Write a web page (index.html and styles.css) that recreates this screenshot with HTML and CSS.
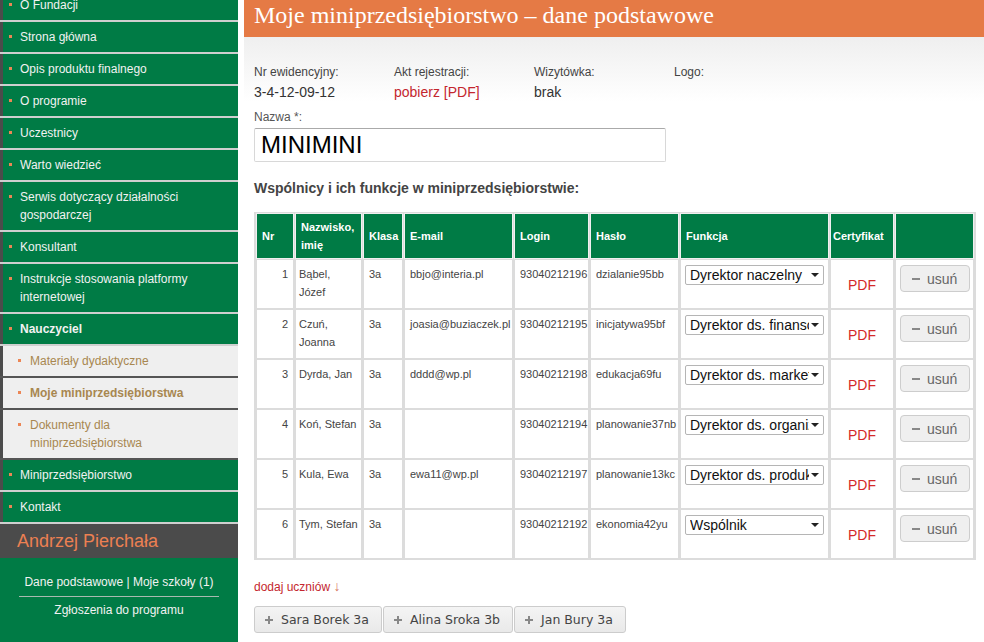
FILE: index.html
```html
<!DOCTYPE html>
<html lang="pl">
<head>
<meta charset="utf-8">
<title>Moje miniprzedsiębiorstwo – dane podstawowe</title>
<link rel="stylesheet" href="styles.css">
</head>
<body>
<div class="page">
  <aside class="sidebar">
    <ul class="menu">
      <li><a href="#">O Fundacji</a></li>
      <li><a href="#">Strona główna</a></li>
      <li><a href="#">Opis produktu finalnego</a></li>
      <li><a href="#">O programie</a></li>
      <li><a href="#">Uczestnicy</a></li>
      <li><a href="#">Warto wiedzieć</a></li>
      <li><a href="#">Serwis dotyczący działalności gospodarczej</a></li>
      <li><a href="#">Konsultant</a></li>
      <li><a href="#">Instrukcje stosowania platformy internetowej</a></li>
      <li class="strong"><a href="#">Nauczyciel</a></li>
      <li class="sub"><a href="#">Materiały dydaktyczne</a></li>
      <li class="sub strong"><a href="#">Moje miniprzedsiębiorstwa</a></li>
      <li class="sub"><a href="#">Dokumenty dla miniprzedsiębiorstwa</a></li>
      <li><a href="#">Miniprzedsiębiorstwo</a></li>
      <li><a href="#">Kontakt</a></li>
    </ul>
    <div class="user">Andrzej Pierchała</div>
    <div class="user-links">
      <div class="user-line">Dane podstawowe | Moje szkoły (1)</div>
      <div class="user-sep"></div>
      <div class="user-line">Zgłoszenia do programu</div>
    </div>
  </aside>

  <main class="main">
    <header class="title-bar">
      <h1>Moje miniprzedsiębiorstwo – dane podstawowe</h1>
    </header>
    <div class="content">
      <div class="info">
        <div class="info-item">
          <div class="label">Nr ewidencyjny:</div>
          <div class="value">3-4-12-09-12</div>
        </div>
        <div class="info-item">
          <div class="label">Akt rejestracji:</div>
          <div class="value link">pobierz [PDF]</div>
        </div>
        <div class="info-item">
          <div class="label">Wizytówka:</div>
          <div class="value">brak</div>
        </div>
        <div class="info-item">
          <div class="label">Logo:</div>
        </div>
      </div>

      <div class="field-label">Nazwa *:</div>
      <input class="name-input" type="text" value="MINIMINI">

      <h2 class="section-title">Wspólnicy i ich funkcje w miniprzedsiębiorstwie:</h2>

      <table class="members">
        <colgroup>
          <col class="c-nr"><col class="c-name"><col class="c-class"><col class="c-mail"><col class="c-login"><col class="c-pass"><col class="c-func"><col class="c-cert"><col class="c-act">
        </colgroup>
        <thead>
          <tr>
            <th>Nr</th><th>Nazwisko, imię</th><th>Klasa</th><th>E-mail</th><th>Login</th><th>Hasło</th><th>Funkcja</th><th class="th-cert">Certyfikat</th><th></th>
          </tr>
        </thead>
        <tbody>
          <tr>
            <td class="nr">1</td><td class="name">Bąbel, Józef</td><td>3a</td><td>bbjo@interia.pl</td><td>93040212196</td><td>dzialanie95bb</td>
            <td class="func"><span class="select-wrap"><select class="select"><option>Dyrektor naczelny</option></select><svg class="caret" width="8" height="4" viewBox="0 0 8 4"><path d="M0 0h8L4 4z"/></svg></span></td>
            <td class="cert"><span class="pdf">PDF</span></td>
            <td class="act"><button class="remove"><svg width="8" height="2" viewBox="0 0 8 2"><rect width="8" height="2"/></svg>usuń</button></td>
          </tr>
          <tr>
            <td class="nr">2</td><td class="name">Czuń, Joanna</td><td>3a</td><td>joasia@buziaczek.pl</td><td>93040212195</td><td>inicjatywa95bf</td>
            <td class="func"><span class="select-wrap"><select class="select"><option>Dyrektor ds. finansów</option></select><svg class="caret" width="8" height="4" viewBox="0 0 8 4"><path d="M0 0h8L4 4z"/></svg></span></td>
            <td class="cert"><span class="pdf">PDF</span></td>
            <td class="act"><button class="remove"><svg width="8" height="2" viewBox="0 0 8 2"><rect width="8" height="2"/></svg>usuń</button></td>
          </tr>
          <tr>
            <td class="nr">3</td><td class="name">Dyrda, Jan</td><td>3a</td><td>dddd@wp.pl</td><td>93040212198</td><td>edukacja69fu</td>
            <td class="func"><span class="select-wrap"><select class="select"><option>Dyrektor ds. marketingu</option></select><svg class="caret" width="8" height="4" viewBox="0 0 8 4"><path d="M0 0h8L4 4z"/></svg></span></td>
            <td class="cert"><span class="pdf">PDF</span></td>
            <td class="act"><button class="remove"><svg width="8" height="2" viewBox="0 0 8 2"><rect width="8" height="2"/></svg>usuń</button></td>
          </tr>
          <tr>
            <td class="nr">4</td><td class="name">Koń, Stefan</td><td>3a</td><td></td><td>93040212194</td><td>planowanie37nb</td>
            <td class="func"><span class="select-wrap"><select class="select"><option>Dyrektor ds. organizacji</option></select><svg class="caret" width="8" height="4" viewBox="0 0 8 4"><path d="M0 0h8L4 4z"/></svg></span></td>
            <td class="cert"><span class="pdf">PDF</span></td>
            <td class="act"><button class="remove"><svg width="8" height="2" viewBox="0 0 8 2"><rect width="8" height="2"/></svg>usuń</button></td>
          </tr>
          <tr>
            <td class="nr">5</td><td class="name">Kula, Ewa</td><td>3a</td><td>ewa11@wp.pl</td><td>93040212197</td><td>planowanie13kc</td>
            <td class="func"><span class="select-wrap"><select class="select"><option>Dyrektor ds. produkcji</option></select><svg class="caret" width="8" height="4" viewBox="0 0 8 4"><path d="M0 0h8L4 4z"/></svg></span></td>
            <td class="cert"><span class="pdf">PDF</span></td>
            <td class="act"><button class="remove"><svg width="8" height="2" viewBox="0 0 8 2"><rect width="8" height="2"/></svg>usuń</button></td>
          </tr>
          <tr>
            <td class="nr">6</td><td class="name">Tym, Stefan</td><td>3a</td><td></td><td>93040212192</td><td>ekonomia42yu</td>
            <td class="func"><span class="select-wrap"><select class="select"><option>Wspólnik</option></select><svg class="caret" width="8" height="4" viewBox="0 0 8 4"><path d="M0 0h8L4 4z"/></svg></span></td>
            <td class="cert"><span class="pdf">PDF</span></td>
            <td class="act"><button class="remove"><svg width="8" height="2" viewBox="0 0 8 2"><rect width="8" height="2"/></svg>usuń</button></td>
          </tr>
        </tbody>
      </table>

      <div class="add-link">dodaj uczniów <span class="arrow">↓</span></div>

      <div class="picks">
        <button class="pick"><svg width="8" height="8" viewBox="0 0 8 8"><path d="M3 0h2v3h3v2H5v3H3V5H0V3h3z"/></svg>Sara Borek 3a</button>
        <button class="pick"><svg width="8" height="8" viewBox="0 0 8 8"><path d="M3 0h2v3h3v2H5v3H3V5H0V3h3z"/></svg>Alina Sroka 3b</button>
        <button class="pick"><svg width="8" height="8" viewBox="0 0 8 8"><path d="M3 0h2v3h3v2H5v3H3V5H0V3h3z"/></svg>Jan Bury 3a</button>
      </div>
    </div>
  </main>
</div>
</body>
</html>
```

FILE: styles.css
```css
* { box-sizing: border-box; }

body {
  margin: 0;
  font-family: "Liberation Sans", Arial, sans-serif;
  background: #fff;
  color: #444;
}

.page {
  display: flex;
  height: 642px;
  overflow: hidden;
}

/* ---------- sidebar ---------- */
.sidebar {
  width: 238px;
  flex: none;
  background: #007b45;
  display: flex;
  flex-direction: column;
}

.menu {
  list-style: none;
  margin: -10px 0 0;
  padding: 0;
}

.menu li {
  border-bottom: 2px solid #cfcfcf;
}

.menu a {
  display: flex;
  align-items: flex-start;
  padding: 6px 20px 6px 0;
  border-left: 3px solid #4b4b4b;
  font-size: 12px;
  line-height: 18px;
  color: #f2f2f2;
  text-decoration: none;
}

.menu a::before {
  content: "";
  flex: none;
  width: 3px;
  height: 3px;
  margin: 7px 8px 0 6px;
  background: #ec8655;
}

.menu .strong a { font-weight: bold; }

.menu .sub {
  background: #efefef;
  border-bottom-color: #555;
}

.menu .sub a { color: #a8874f; }

.menu .sub a::before {
  margin-left: 15px;
  margin-right: 9px;
}

.user {
  height: 34px;
  padding-left: 17px;
  background: #4b4b4b;
  color: #ec8052;
  font-size: 18px;
  line-height: 34px;
}

.user-links {
  padding-top: 16px;
  text-align: center;
  color: #f2f2f2;
  font-size: 12px;
}

.user-line { line-height: 16px; }

.user-sep {
  width: 200px;
  height: 1px;
  margin: 6px auto 5px;
  background: #a9b9b0;
}

/* ---------- main ---------- */
.main {
  flex: 1;
  min-width: 0;
  margin-left: 6px;
}

.title-bar {
  height: 37px;
  padding-left: 10px;
  background: #e57a45;
}

.title-bar h1 {
  margin: 0;
  font-family: "Liberation Serif", "Times New Roman", serif;
  font-weight: normal;
  font-size: 24px;
  line-height: 31px;
  color: #fff;
  white-space: nowrap;
}

.content {
  padding: 27px 8px 0 10px;
  background: linear-gradient(#efefef, #fff 65px);
}

.info {
  display: grid;
  grid-template-columns: repeat(4, 140px);
}

.label {
  font-size: 12px;
  line-height: 16px;
  color: #444;
}

.value {
  margin-top: 2px;
  font-size: 14px;
  line-height: 20px;
  color: #333;
}

.value.link { color: #c4262e; }

.field-label {
  margin-top: 7px;
  font-size: 12px;
  line-height: 16px;
  color: #555;
}

.name-input {
  display: block;
  width: 412px;
  height: 34px;
  margin-top: 3px;
  padding: 0 6px;
  border: 1px solid #d8d8d8;
  border-top-color: #aaa;
  border-radius: 2px;
  font-family: "Liberation Sans", Arial, sans-serif;
  font-size: 24px;
  color: #000;
  background: #fff;
}

.section-title {
  margin: 17px 0 15px;
  font-size: 14px;
  line-height: 18px;
  font-weight: bold;
  color: #444;
}

/* ---------- table ---------- */
.members {
  width: 722px;
  table-layout: fixed;
  border-spacing: 3px 2px;
  background: #dcdcdc;
  font-size: 11px;
  color: #444;
}

.c-nr { width: 36px; }
.c-name { width: 65px; }
.c-class { width: 38px; }
.c-mail { width: 107px; }
.c-login { width: 73px; }
.c-pass { width: 87px; }
.c-func { width: 147px; }
.c-cert { width: 62px; }
.c-act { width: 77px; }

.members th {
  height: 44px;
  padding: 0 5px;
  background: #007b45;
  color: #fff;
  font-weight: bold;
  text-align: left;
  line-height: 18px;
  vertical-align: middle;
  box-shadow: 0 0 0 1px #f0f0f0;
}

.members th.th-cert { padding: 0 2px; }

.members td {
  height: 48px;
  padding: 5px;
  background: #fff;
  line-height: 18px;
  vertical-align: top;
  overflow: hidden;
  white-space: nowrap;
}

.members td.name {
  padding: 5px 2px 5px 3px;
  white-space: normal;
}

.members td.nr { text-align: right; }

.members td.func { padding: 5px 4px; }

.select-wrap {
  position: relative;
  display: block;
  width: 139px;
}

.select {
  display: block;
  width: 139px;
  height: 20px;
  padding: 0 14px 0 4px;
  border: 1px solid #b5b5b5;
  border-radius: 2px;
  background: #fff;
  font-family: "Liberation Sans", Arial, sans-serif;
  font-size: 14px;
  color: #111;
  appearance: none;
  -webkit-appearance: none;
}

.caret {
  position: absolute;
  right: 5px;
  top: 8px;
  fill: #222;
}

.members td.cert { text-align: center; }

.pdf {
  display: inline-block;
  margin-top: 11px;
  font-size: 14px;
  line-height: 18px;
  color: #d42a2a;
}

.members td.act { padding: 5px 4px; }

.remove {
  display: flex;
  align-items: center;
  gap: 7px;
  width: 70px;
  height: 27px;
  padding: 0 0 0 11px;
  border: 1px solid #cdcdcd;
  border-radius: 4px;
  background: #efefef;
  font-family: "Liberation Sans", Arial, sans-serif;
  font-size: 14px;
  color: #666;
}

.remove svg { fill: #888; }

.add-link {
  margin-top: 18px;
  font-size: 12px;
  line-height: 16px;
  color: #c4262e;
}

.arrow {
  font-size: 14px;
  color: #d77a63;
}

.picks {
  display: flex;
  gap: 1px;
  margin-top: 11px;
}

.pick {
  display: flex;
  align-items: center;
  gap: 8px;
  height: 27px;
  padding: 0 12px 0 10px;
  border: 1px solid #ccc;
  border-radius: 3px;
  background: linear-gradient(#f4f4f4, #e9e9e9);
  font-family: "DejaVu Sans", Verdana, sans-serif;
  font-size: 12.5px;
  color: #444;
}

.pick svg { fill: #888; flex: none; }
```
